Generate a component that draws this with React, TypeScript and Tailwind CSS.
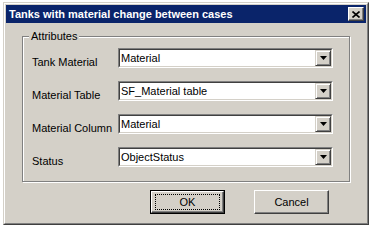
const font = { fontFamily: '"Liberation Sans", Arial, sans-serif' };

function ComboBox({ value }: { value: string }) {
  return (
    <div className="flex h-[20px] w-[215px] border border-t-[#808080] border-l-[#808080] border-b-white border-r-white">
      <div className="flex flex-1 border border-t-[#404040] border-l-[#404040] border-b-[#d4d0c8] border-r-[#d4d0c8] bg-white">
        <div className="flex-1 pl-[1px] text-[11px] leading-[16px] text-black">{value}</div>
        <div className="flex w-[16px] items-center justify-center border border-t-[#d4d0c8] border-l-[#d4d0c8] border-b-[#404040] border-r-[#404040] bg-[#d4d0c8] shadow-[inset_1px_1px_0_#fff,inset_-1px_-1px_0_#808080]">
          <svg width="7" height="4" viewBox="0 0 7 4">
            <path d="M0 0h7L3.5 4z" fill="#000" />
          </svg>
        </div>
      </div>
    </div>
  );
}

function Row({ label, value }: { label: string; value: string }) {
  return (
    <div className="flex items-start">
      <div className="w-[86px] pt-[8px] text-[11px] leading-[13px] text-black">{label}</div>
      <ComboBox value={value} />
    </div>
  );
}

function Button({ children, focused }: { children: string; focused?: boolean }) {
  return (
    <div
      className={
        "h-[24px] w-[75px] border " +
        (focused ? "border-black" : "border-t-white border-l-white border-b-[#404040] border-r-[#404040]")
      }
    >
      <div
        className={
          "flex h-full w-full items-center justify-center text-[11px] text-black " +
          (focused
            ? "border border-t-white border-l-white border-b-[#404040] border-r-[#404040] shadow-[inset_-1px_-1px_0_#808080]"
            : "shadow-[inset_-1px_-1px_0_#808080]")
        }
      >
        {focused ? (
          <div className="flex h-[16px] w-[65px] items-center justify-center border border-dotted border-black">
            {children}
          </div>
        ) : (
          children
        )}
      </div>
    </div>
  );
}

export default function App() {
  return (
    <div className="h-[227px] w-[372px] bg-white pl-[3px] pt-[2px]" style={font}>
      <div className="h-[223px] w-[366px] border border-t-[#d4d0c8] border-l-[#d4d0c8] border-b-[#404040] border-r-[#404040] bg-[#d4d0c8]">
        <div className="flex h-full flex-col border border-t-white border-l-white border-b-[#808080] border-r-[#808080] p-[1px]">
          <div className="flex h-[18px] items-center justify-between bg-[#0a246a] pl-[3px] pr-[2px]">
            <span className="text-[11px] font-bold text-white">
              Tanks with material change between cases
            </span>
            <div className="flex h-[14px] w-[16px] items-center justify-center border border-t-white border-l-white border-b-[#404040] border-r-[#404040] bg-[#d4d0c8] shadow-[inset_-1px_-1px_0_#808080]">
              <svg width="8" height="7" viewBox="0 0 8 7">
                <path d="M0.5 0.5L7.5 6.5M7.5 0.5L0.5 6.5" stroke="#000" strokeWidth="1.6" />
              </svg>
            </div>
          </div>

          <div className="relative ml-[16px] mt-[13px] h-[146px] w-[328px] border border-[#808080] shadow-[inset_1px_1px_0_#fff,1px_1px_0_#fff]">
            <span className="absolute left-[6px] top-[-8px] bg-[#d4d0c8] px-[2px] text-[11px] leading-[14px] text-black">
              Attributes
            </span>
            <div className="flex flex-col gap-[12px] pl-[9px] pt-[11px]">
              <Row label="Tank Material" value="Material" />
              <Row label="Material Table" value="SF_Material table" />
              <Row label="Material Column" value="Material" />
              <Row label="Status" value="ObjectStatus" />
            </div>
          </div>

          <div className="mt-[8px] flex gap-[29px] pl-[144px]">
            <Button focused>OK</Button>
            <Button>Cancel</Button>
          </div>
        </div>
      </div>
    </div>
  );
}
